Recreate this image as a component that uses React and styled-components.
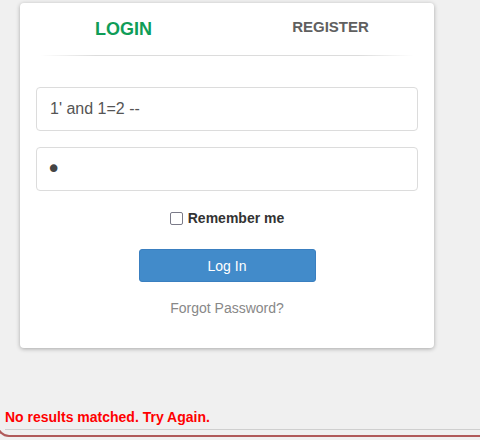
import styled, { createGlobalStyle } from "styled-components";

const GlobalStyle = createGlobalStyle`
  html, body {
    margin: 0;
    padding: 0;
    background: #f0f0f0;
    font-family: "Liberation Sans", Arial, sans-serif;
    overflow: hidden;
  }
`;

const Viewport = styled.div`
  width: 100vw;
  height: 100vh;
  overflow: hidden;
`;

const Frame = styled.div`
  box-sizing: border-box;
  margin-left: -3px;
  width: calc(100% + 30px);
  height: 437px;
  border-left: 2px solid #b05a5a;
  border-bottom: 2px solid #b05a5a;
  border-bottom-left-radius: 12px;
  padding: 3px 0 0 21px;
  display: flex;
  flex-direction: column;
`;

const Card = styled.div`
  box-sizing: border-box;
  width: 414px;
  height: 345px;
  background: #fff;
  border-radius: 4px;
  box-shadow: 0 1px 4px rgba(0, 0, 0, 0.3);
  display: flex;
  flex-direction: column;
`;

const Tabs = styled.div`
  display: flex;
  height: 52px;
`;

const Tab = styled.div`
  flex: 1;
  display: flex;
  justify-content: center;
  align-items: center;
  padding-bottom: ${(p) => (p.$active ? "0" : "6px")};
  font-weight: bold;
  font-size: ${(p) => (p.$active ? "18px" : "15px")};
  color: ${(p) => (p.$active ? "#0f9d58" : "#606060")};
`;

const Divider = styled.div`
  margin: 0 20px;
  height: 1px;
  background: linear-gradient(
    to right,
    rgba(220, 220, 220, 0),
    #dcdcdc 15%,
    #dcdcdc 85%,
    rgba(220, 220, 220, 0)
  );
`;

const Form = styled.form`
  display: flex;
  flex-direction: column;
  padding: 31px 16px 0;
`;

const Input = styled.input`
  box-sizing: border-box;
  width: 100%;
  height: 44px;
  margin-bottom: 16px;
  padding: 0 13px;
  border: 1px solid #dcdcdc;
  border-radius: 4px;
  font-family: "Liberation Sans", Arial, sans-serif;
  font-size: 16px;
  color: #555;
  outline: none;
`;

const PasswordInput = styled(Input)`
  padding: 0 9px;
  font-family: "DejaVu Sans", sans-serif;
  font-size: 26px;
  color: #444;
`;

const Remember = styled.label`
  display: flex;
  align-items: center;
  justify-content: center;
  gap: 5px;
  margin-top: 3px;
  font-size: 14px;
  font-weight: bold;
  color: #333;
`;

const Check = styled.span`
  box-sizing: border-box;
  width: 13px;
  height: 13px;
  border: 1.5px solid #7a7a88;
  border-radius: 2px;
  background: #fff;
`;

const SubmitButton = styled.button`
  align-self: center;
  width: 177px;
  height: 33px;
  margin-top: 23px;
  border: 1px solid #3a7fc0;
  border-radius: 3px;
  background: #428bca;
  color: #fff;
  font-family: "Liberation Sans", Arial, sans-serif;
  font-size: 14px;
  cursor: pointer;
`;

const Forgot = styled.div`
  margin-top: 18px;
  text-align: center;
  font-size: 14px;
  color: #888;
`;

const Footer = styled.div`
  margin-top: auto;
  margin-left: -15px;
  margin-bottom: 5px;
  border-bottom: 1px solid #cfcfcf;
  padding-bottom: 4px;
`;

const ErrorText = styled.div`
  font-size: 14px;
  font-weight: bold;
  color: #ff0000;
`;

const App = () => {
  return (
    <Viewport>
      <GlobalStyle />
      <Frame>
        <Card>
          <Tabs>
            <Tab $active>LOGIN</Tab>
            <Tab>REGISTER</Tab>
          </Tabs>
          <Divider />
          <Form>
            <Input defaultValue="1' and 1=2 --" />
            <PasswordInput type="password" defaultValue="a" />
            <Remember>
              <Check />
              Remember me
            </Remember>
            <SubmitButton type="button">Log In</SubmitButton>
            <Forgot>Forgot Password?</Forgot>
          </Form>
        </Card>
        <Footer>
          <ErrorText>No results matched. Try Again.</ErrorText>
        </Footer>
      </Frame>
    </Viewport>
  );
};

export default App;
